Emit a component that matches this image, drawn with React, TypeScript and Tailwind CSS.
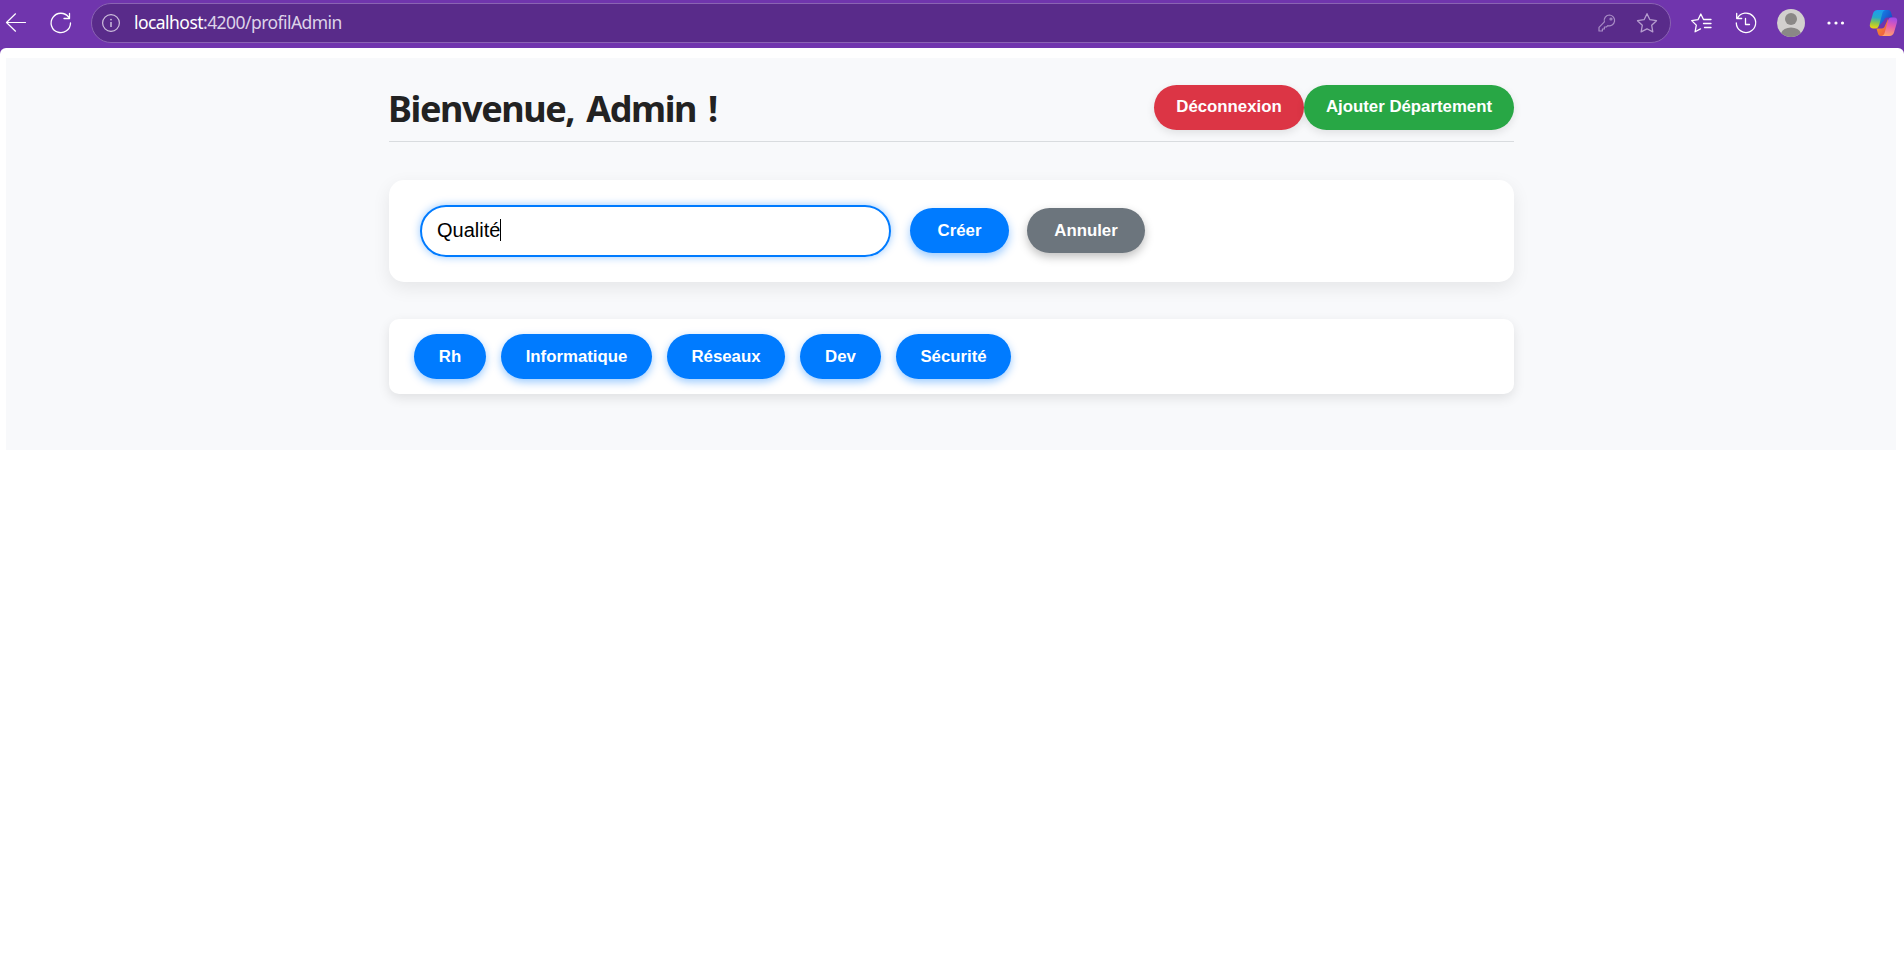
import type { ReactNode } from 'react';

const departments = [
  { name: 'Rh', width: 'w-[72px]' },
  { name: 'Informatique', width: 'w-[151px]' },
  { name: 'Réseaux', width: 'w-[118px]' },
  { name: 'Dev', width: 'w-[81px]' },
  { name: 'Sécurité', width: 'w-[115px]' },
];

function Pill({ className, children }: { className: string; children: ReactNode }) {
  return (
    <button
      className={`flex h-[45px] items-center justify-center whitespace-nowrap rounded-full text-[16.8px] leading-[20px] font-bold text-white ${className}`}
    >
      {children}
    </button>
  );
}

function CopilotLogo() {
  return (
    <svg className="mt-[9px] h-7 w-[30px] shrink-0" viewBox="0 0 30 28">
      <defs>
        <linearGradient id="cp-left" x1="0.4" y1="0" x2="0.3" y2="1">
          <stop offset="0" stopColor="#1b9df0" />
          <stop offset="0.4" stopColor="#27a9c9" />
          <stop offset="0.7" stopColor="#8fc64a" />
          <stop offset="1" stopColor="#f2d20d" />
        </linearGradient>
        <linearGradient id="cp-right" x1="0.6" y1="0" x2="0.4" y2="1">
          <stop offset="0" stopColor="#a04be8" />
          <stop offset="0.45" stopColor="#e65cb0" />
          <stop offset="1" stopColor="#ffa36b" />
        </linearGradient>
        <linearGradient id="cp-top" x1="0" y1="0" x2="1" y2="0.6">
          <stop offset="0" stopColor="#1793ee" />
          <stop offset="1" stopColor="#1747c4" />
        </linearGradient>
        <linearGradient id="cp-bottom" x1="0" y1="0" x2="1" y2="1">
          <stop offset="0" stopColor="#f5a623" />
          <stop offset="1" stopColor="#ee4a4a" />
        </linearGradient>
      </defs>
      <path d="M8 1h11c1.8 0 2.7 1.2 3.2 3l1.3 4.5h-5c-2 0-3 1-3.600 3L10 17Z" fill="url(#cp-top)" />
      <path d="M20 27h-8c-1.800 0-2.700-1.200-3.200-3L7.500 19.500h5c2 0 3-1 3.600-3L19 10Z" fill="url(#cp-bottom)" />
      <path d="M8.500 1h8c-2 .3-2.700 1.700-3.300 3.700l-3 11c-.7 2.400-1.600 3.800-3.700 3.800H4c-2.800 0-3.700-2-3-4.700L4 4.500C4.700 2.200 6.200 1 8.500 1Z" fill="url(#cp-left)" />
      <path d="M20.500 27h-8c2-.3 2.700-1.700 3.300-3.700l3-11c.7-2.400 1.600-3.800 3.700-3.800H25c2.800 0 3.700 2 3 4.700l-3 10.300c-.7 2.300-2.200 3.500-4.500 3.500Z" fill="url(#cp-right)" />
    </svg>
  );
}

function BrowserBar() {
  return (
    <div className="flex h-[54px] shrink-0 items-start bg-[#7035ad]">
      <svg className="mt-[3px] ml-[2px] h-10 w-[28px] shrink-0" viewBox="2 3 28 40" fill="none" stroke="#fff" strokeWidth="1.2" strokeLinecap="round" strokeLinejoin="round">
        <path d="M25.500 22.500H6.500M15.500 13.800 6.500 22.500l9 8.700" />
      </svg>
      <svg className="mt-[3px] ml-[16px] h-10 w-[32px] shrink-0" viewBox="46 3 32 40" fill="none" stroke="#fff" strokeWidth="1.3" strokeLinecap="round" strokeLinejoin="round">
        <path d="M70.500 23A9.700 9.700 0 1 1 68.600 17.200M69.500 13.500V18.500H64" />
      </svg>
      <div className="mt-[3px] ml-[13px] flex h-10 w-[1580px] shrink-0 items-center rounded-full border border-[#8a63b3] bg-[#592b8a]">
        <svg className="ml-[9px] h-5 w-5 shrink-0" viewBox="0 0 20 20" fill="none" stroke="#cdbfdc" strokeWidth="1.2">
          <circle cx="10" cy="10" r="8.4" />
          <path d="M10 9v5" strokeWidth="1.5" />
          <circle cx="10" cy="6.6" r=".9" fill="#cdbfdc" stroke="none" />
        </svg>
        <div className="ml-[13px] whitespace-nowrap pb-px font-['Noto_Sans',sans-serif] text-[17.500px] tracking-[-0.550px] text-[#ddd3e8]">
          <span className="text-white">localhost</span>:4200/profilAdmin
        </div>
        <svg className="ml-auto h-5 w-5 shrink-0" viewBox="0 0 20 20" fill="none" stroke="#a88cc5" strokeWidth="1.2" strokeLinejoin="round">
          <path d="M12.600 2a5.400 5.400 0 0 0-5.200 6.900L2 14.300V18h3.400v-2h2v-2h2l1.400-1.400A5.400 5.400 0 1 0 12.600 2Z" />
          <circle cx="14" cy="6" r="1" />
        </svg>
        <svg className="mr-[11px] ml-[18px] h-6 w-6 shrink-0" viewBox="0 0 24 24" fill="none" stroke="#b59dce" strokeWidth="1.3" strokeLinejoin="round">
          <path d="m12 2.700 2.900 6 6.600 1-4.800 4.600 1.100 6.600-5.800-3.100-5.900 3.100 1.200-6.600-4.800-4.600 6.600-1Z" />
        </svg>
      </div>
      <svg className="mt-[3px] h-10 w-[198px] shrink-0" viewBox="1671 3 198 40" fill="none" stroke="#fff" strokeWidth="1.3" strokeLinecap="round" strokeLinejoin="round">
        <path d="M1708 19.500h-4.500l-2.700-5.500-2.800 5.700-6.300.9 4.600 4.500-1.200 6.700 5.400-2.900M1704.500 19.500h6.500M1703.500 23.500h7.500M1704.500 27.500h6.500" />
        <path d="M1737.300 18.500a9.700 9.700 0 1 1-1 4.500M1736.700 13.500v5h5M1745.500 18.500v6h4" />
        <circle cx="1791" cy="23" r="14" fill="#d2d0ce" stroke="none" />
        <circle cx="1791" cy="19" r="6" fill="#8a8886" stroke="none" />
        <path d="M1781.200 33a10 7 0 0 1 19.600 0 14 14 0 0 1-19.600 0Z" fill="#8a8886" stroke="none" />
        <g fill="#fff" stroke="none">
          <circle cx="1829" cy="23" r="1.600" />
          <circle cx="1836" cy="23" r="1.600" />
          <circle cx="1842.500" cy="23" r="1.600" />
        </g>
      </svg>
      <CopilotLogo />
    </div>
  );
}

export default function App() {
  return (
    <div className="flex h-[965px] w-[1904px] flex-col overflow-hidden bg-white font-['Liberation_Sans',Arial,sans-serif]">
      <BrowserBar />
      <div className="relative -mt-[6px] flex-1 rounded-t-[6px] bg-white px-[6px] pt-[10px]">
        <main className="mr-[2px] h-[392px] bg-[#f8f9fb] pt-[27px] pl-[383px]">
          <div className="w-[1125px]">
            <header className="flex h-[57px] items-start justify-between border-b border-[#d9dcdf]">
              <h1 className="-ml-px whitespace-nowrap font-['Noto_Sans',sans-serif] text-[36px] leading-[47px] font-bold tracking-[-1.400px] [word-spacing:4px] text-[#222]">Bienvenue, Admin !</h1>
              <div className="flex">
                <Pill className="w-[150px] bg-[#dc3545] pb-[2px] shadow-[0_3px_8px_rgba(0,0,0,0.1)]">Déconnexion</Pill>
                <Pill className="w-[210px] bg-[#28a745] pb-[2px] shadow-[0_3px_8px_rgba(0,0,0,0.1)]">Ajouter Département</Pill>
              </div>
            </header>
            <form className="mt-[38px] flex h-[102px] items-center rounded-[15px] bg-white pl-[31px] shadow-[0_6px_18px_rgba(0,0,0,0.08)]">
              <div className="flex h-[52px] w-[471px] items-center rounded-full border-2 border-[#007bff] pb-[2px] pl-[15px] text-[20px] text-black shadow-[0_0_8px_rgba(0,123,255,0.4)]">
                <span>Qualité</span>
                <span className="h-[22px] w-px bg-black" />
              </div>
              <Pill className="mb-px ml-[19px] w-[99px] bg-[#007bff] shadow-[0_4px_10px_rgba(0,123,255,0.4)]">Créer</Pill>
              <Pill className="mb-px ml-[18px] w-[118px] bg-[#6c757d] shadow-[0_4px_10px_rgba(0,0,0,0.25)]">Annuler</Pill>
            </form>
            <section className="mt-[37px] flex h-[75px] items-center gap-[15px] rounded-[10px] bg-white pl-[25px] shadow-[0_4px_12px_rgba(0,0,0,0.1)]">
              {departments.map((d) => (
                <Pill key={d.name} className={`${d.width} bg-[#007bff] shadow-[0_3px_8px_rgba(0,123,255,0.4)]`}>{d.name}</Pill>
              ))}
            </section>
          </div>
        </main>
      </div>
    </div>
  );
}
